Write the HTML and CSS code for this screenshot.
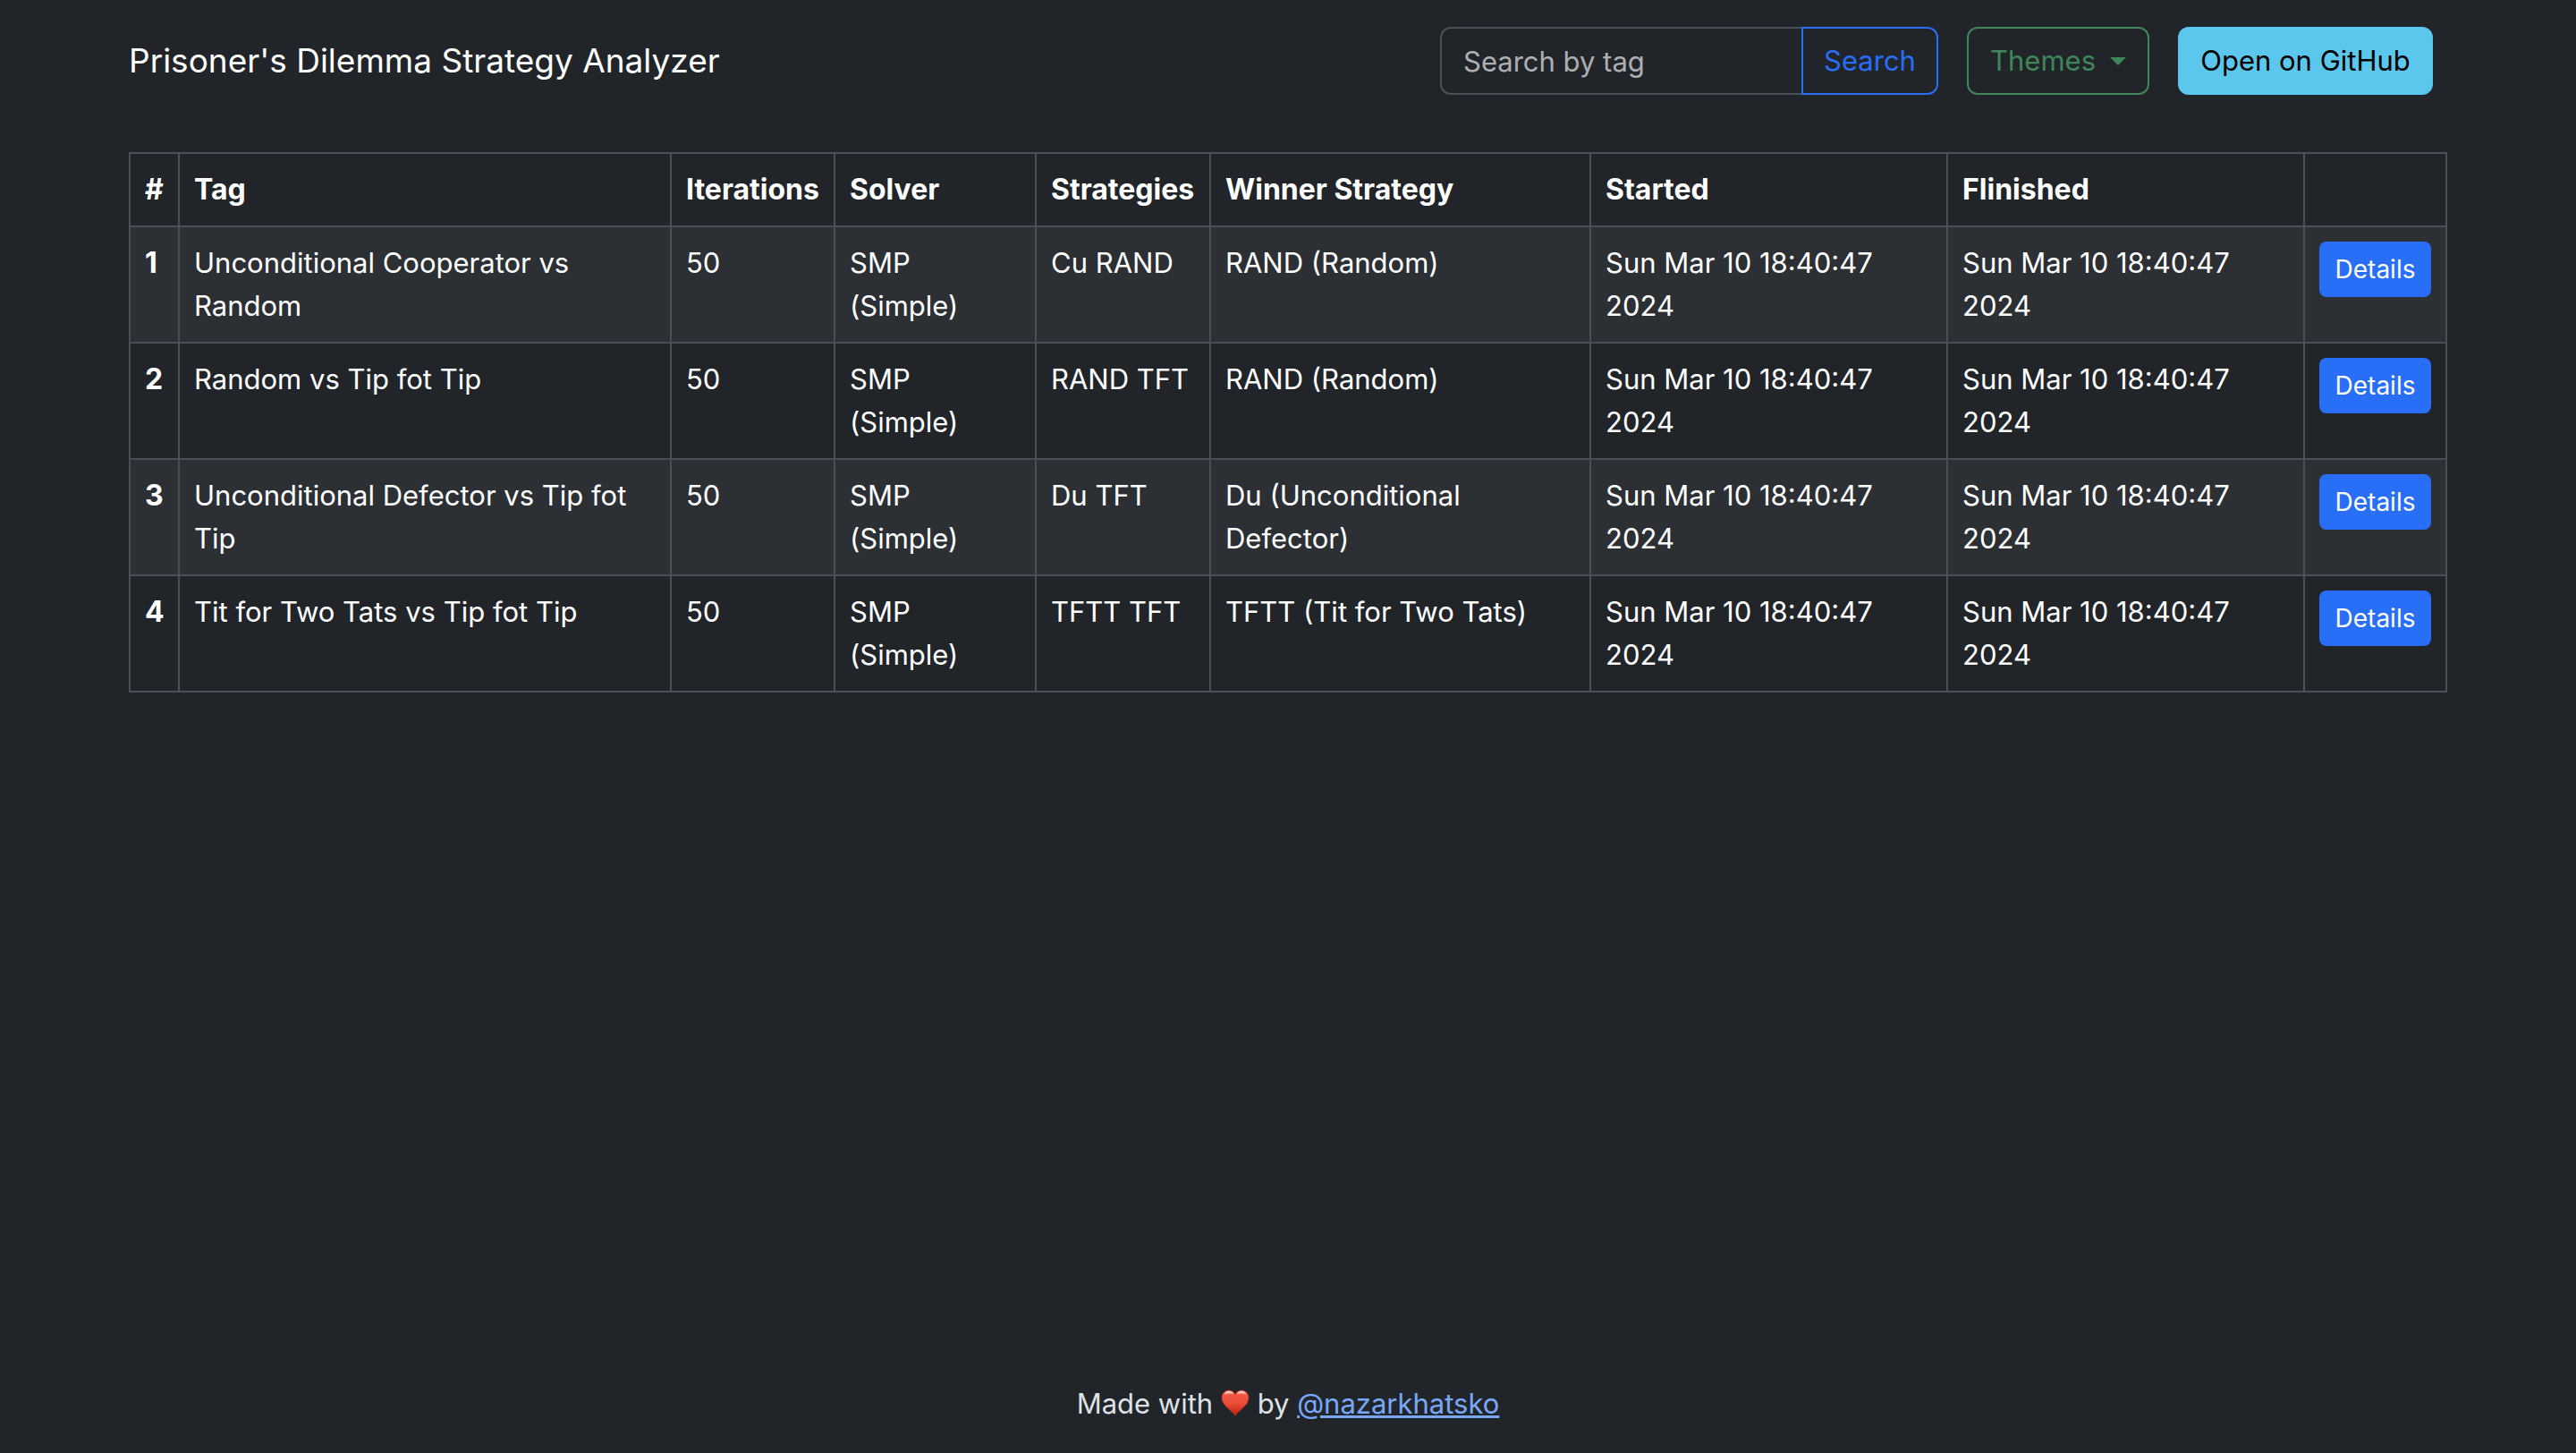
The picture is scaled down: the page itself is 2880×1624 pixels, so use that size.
FILE: index.html
```html
<!DOCTYPE html>
<html lang="en">
<head>
<meta charset="utf-8">
<meta name="viewport" content="width=device-width, initial-scale=1">
<title>Prisoner's Dilemma Strategy Analyzer</title>
<link rel="stylesheet" href="styles.css">
</head>
<body>
<header class="container navbar">
  <a class="brand" href="#">Prisoner's Dilemma Strategy Analyzer</a>
  <div class="tools">
    <form class="search" role="search">
      <input class="search-input" type="search" placeholder="Search by tag" aria-label="Search by tag">
      <button class="btn btn-search" type="submit">Search</button>
    </form>
    <button class="btn btn-themes" type="button" aria-haspopup="true">Themes<span class="caret"></span></button>
    <a class="btn btn-github" href="#">Open on GitHub</a>
  </div>
</header>
<main class="container">
  <table class="results">
    <colgroup>
      <col class="col-num"><col><col class="col-iterations"><col class="col-solver"><col class="col-strategies"><col class="col-winner"><col class="col-date"><col class="col-date"><col class="col-action">
    </colgroup>
    <thead>
      <tr><th scope="col">#</th><th scope="col">Tag</th><th scope="col">Iterations</th><th scope="col">Solver</th><th scope="col">Strategies</th><th scope="col">Winner Strategy</th><th scope="col">Started</th><th scope="col">Flinished</th><th></th></tr>
    </thead>
    <tbody>
      <tr><th scope="row">1</th><td>Unconditional Cooperator vs Random</td><td>50</td><td>SMP (Simple)</td><td>Cu RAND</td><td>RAND (Random)</td><td>Sun Mar 10 18:40:47 2024</td><td>Sun Mar 10 18:40:47 2024</td><td><button class="btn-details" type="button">Details</button></td></tr>
      <tr><th scope="row">2</th><td>Random vs Tip fot Tip</td><td>50</td><td>SMP (Simple)</td><td>RAND TFT</td><td>RAND (Random)</td><td>Sun Mar 10 18:40:47 2024</td><td>Sun Mar 10 18:40:47 2024</td><td><button class="btn-details" type="button">Details</button></td></tr>
      <tr><th scope="row">3</th><td>Unconditional Defector vs Tip fot Tip</td><td>50</td><td>SMP (Simple)</td><td>Du TFT</td><td>Du (Unconditional Defector)</td><td>Sun Mar 10 18:40:47 2024</td><td>Sun Mar 10 18:40:47 2024</td><td><button class="btn-details" type="button">Details</button></td></tr>
      <tr><th scope="row">4</th><td>Tit for Two Tats vs Tip fot Tip</td><td>50</td><td>SMP (Simple)</td><td>TFTT TFT</td><td>TFTT (Tit for Two Tats)</td><td>Sun Mar 10 18:40:47 2024</td><td>Sun Mar 10 18:40:47 2024</td><td><button class="btn-details" type="button">Details</button></td></tr>
    </tbody>
  </table>
</main>
<footer class="footer">
  Made with
  <svg class="heart" viewBox="0 0 32 30" role="img" aria-label="love">
    <defs>
      <linearGradient id="body" x1="0" y1="0" x2="0" y2="1"><stop offset="0" stop-color="#f4604a"/><stop offset=".55" stop-color="#ea4a38"/><stop offset="1" stop-color="#b8200e"/></linearGradient>
      <linearGradient id="shine" x1="0" y1="0" x2="0" y2="1"><stop offset="0" stop-color="#fff" stop-opacity=".9"/><stop offset="1" stop-color="#fff" stop-opacity="0"/></linearGradient>
    </defs>
    <path fill="url(#body)" stroke="#c8301e" stroke-width=".8" d="M16 29C13 24 1 18 1 9.500C1 4.500 4.500 1 9 1C12.500 1 15 3 16 6C17 3 19.500 1 23 1C27.500 1 31 4.500 31 9.500C31 18 19 24 16 29Z"/>
    <path fill="url(#shine)" d="M3 7C4 3.500 6 1.800 9 1.800C11.500 1.800 13.500 3 14.300 5.500C11 4 6 4.500 3 7ZM29 7C28 3.500 26 1.800 23 1.800C20.500 1.800 18.500 3 17.700 5.500C21 4 26 4.500 29 7Z"/>
  </svg>
  by <a class="author" href="#">@nazarkhatsko</a>
</footer>
</body>
</html>
```
FILE: styles.css
```css
* {
  box-sizing: border-box;
}

body {
  display: flex;
  flex-direction: column;
  min-height: 100vh;
  margin: 0;
  background: #212529;
  color: #dee2e6;
  font-family: Inter, "Liberation Sans", sans-serif;
  font-size: 31px;
  line-height: 48px;
}

button,
input {
  font: inherit;
}

.container {
  width: 90%;
  margin: 0 auto;
}

.navbar {
  display: flex;
  align-items: center;
  justify-content: space-between;
  padding: 30px 16px 64px 0;
}

.brand {
  color: #fff;
  font-size: 37px;
  text-decoration: none;
}

.tools {
  display: flex;
  gap: 32px;
}

.search {
  display: flex;
}

.search-input {
  width: 404px;
  height: 76px;
  padding: 12px 24px;
  border: 2px solid #495057;
  border-right: 0;
  border-radius: 12px 0 0 12px;
  background: transparent;
  color: #dee2e6;
}

.search-input::placeholder {
  color: #adafb2;
  opacity: 1;
}

.btn {
  display: flex;
  align-items: center;
  justify-content: center;
  height: 76px;
  padding: 12px 20px;
  border: 2px solid;
  border-radius: 12px;
  background: transparent;
  text-decoration: none;
  white-space: nowrap;
}

.btn-search {
  width: 153px;
  border-radius: 0 12px 12px 0;
  color: #286ef6;
}

.btn-themes {
  width: 204px;
  color: #3f8659;
}

.caret {
  margin-left: 16px;
  border: 9px solid transparent;
  border-top-color: currentColor;
  border-bottom: 0;
}

.btn-github {
  width: 285px;
  border-color: #5bc7ec;
  background: #5bc7ec;
  color: #000;
}

.results {
  width: 100%;
  border-collapse: collapse;
  table-layout: fixed;
  color: #fff;
}

.results th,
.results td {
  padding: 16px;
  border: 2px solid #495057;
  text-align: left;
  vertical-align: top;
}

.results th {
  font-size: 32px;
}

.results tbody tr:nth-child(odd) {
  background: #2c3034;
}

.col-num {
  width: 55px;
}

.col-iterations {
  width: 183px;
}

.col-solver {
  width: 225px;
}

.col-strategies {
  width: 195px;
}

.col-winner {
  width: 425px;
}

.col-date {
  width: 399px;
}

.col-action {
  width: 159px;
}

.btn-details {
  display: block;
  width: 100%;
  padding: 10px 0;
  border: 0;
  border-radius: 8px;
  background: #286ef6;
  color: #fff;
  font-size: 28px;
  line-height: 42px;
}

.footer {
  margin-top: auto;
  padding-bottom: 31px;
  text-align: center;
}

.heart {
  width: 32px;
  height: 30px;
  vertical-align: -3px;
}

.author {
  color: #7aa8f9;
}
```
